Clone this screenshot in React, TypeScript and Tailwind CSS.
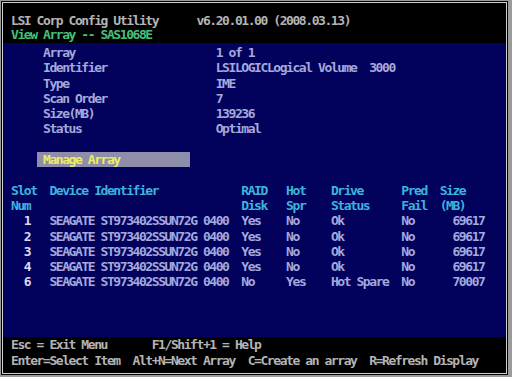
import React from "react";

const L = "text-[#a4a8dc]";
const C = "text-[#3cb4dc]";
const W = "text-[#d8d8f0]";

function sp(n: number) {
  return " ".repeat(Math.max(0, n));
}

type Seg = { t: string; col: number; c?: string; right?: boolean };

function Line({ segs, cls = "" }: { segs: Seg[]; cls?: string }) {
  let pos = 0;
  const out: React.ReactNode[] = [];
  segs.forEach((s, i) => {
    const start = s.right ? s.col - s.t.length : s.col;
    out.push(<span key={"s" + i}>{sp(start - pos)}</span>);
    out.push(
      <span key={"t" + i} className={s.c}>
        {s.t}
      </span>
    );
    pos = start + s.t.length;
  });
  return <div className={"whitespace-pre h-[15.3px] leading-[15.3px] " + cls}>{out}</div>;
}

const info: [string, string][] = [
  ["Array", "1 of 1"],
  ["Identifier", "LSILOGICLogical Volume  3000"],
  ["Type", "IME"],
  ["Scan Order", "7"],
  ["Size(MB)", "139236"],
  ["Status", "Optimal"],
];

const rows: [string, string, string, string, string][] = [
  ["1", "Yes", "No", "Ok", "69617"],
  ["2", "Yes", "No", "Ok", "69617"],
  ["3", "Yes", "No", "Ok", "69617"],
  ["4", "Yes", "No", "Ok", "69617"],
  ["6", "No", "Yes", "Hot Spare", "70007"],
];

export default function App() {
  return (
    <div className="w-[512px] h-[377px] bg-[#9a9a9a] pt-[1px] pl-[1px] pr-[4px] pb-[2px] font-['DejaVu_Sans_Mono',monospace] font-bold text-[13px] tracking-[-1.43px]">
      <div className="w-full h-full bg-black p-[1px]">
        <div className="w-full h-full border border-[#cfcfcf] bg-black flex flex-col">
          <div className="pt-[11px] pb-[1px] pl-[8px] text-[#b4b4b4] leading-[14px]">
            <div className="whitespace-pre h-[14px]">LSI Corp Config Utility      v6.20.01.00 (2008.03.13)</div>
            <div className="whitespace-pre h-[14px] text-[#44c07c]">View Array -- SAS1068E</div>
          </div>
          <div className="flex-1 bg-[#02025c] pt-[2px] pl-[8px]">
            {info.map(([a, b]) => (
              <Line key={a} segs={[{ t: a, col: 5, c: L }, { t: b, col: 32, c: L }]} />
            ))}
            <div className="h-[15.3px]" />
            <div className="h-[15.3px] flex">
              <div className="ml-[25.6px] w-[153.6px] h-full bg-[#8e8eaa] text-[#ecec64] whitespace-pre leading-[15.3px]">
                {" Manage Array"}
              </div>
            </div>
            <div className="h-[15.3px]" />
            <Line
              segs={[
                { t: "Slot", col: 0, c: C },
                { t: "Device Identifier", col: 6, c: C },
                { t: "RAID", col: 36, c: C },
                { t: "Hot", col: 43, c: C },
                { t: "Drive", col: 50, c: C },
                { t: "Pred", col: 61, c: C },
                { t: "Size", col: 67, c: C },
              ]}
            />
            <Line
              segs={[
                { t: "Num", col: 0, c: C },
                { t: "Disk", col: 36, c: C },
                { t: "Spr", col: 43, c: C },
                { t: "Status", col: 50, c: C },
                { t: "Fail", col: 61, c: C },
                { t: "(MB)", col: 67, c: C },
              ]}
            />
            {rows.map((r) => (
              <Line
                key={r[0]}
                segs={[
                  { t: r[0], col: 2, c: W },
                  { t: "SEAGATE ST973402SSUN72G 0400", col: 6, c: L },
                  { t: r[1], col: 36, c: L },
                  { t: r[2], col: 43, c: L },
                  { t: r[3], col: 50, c: L },
                  { t: "No", col: 61, c: L },
                  { t: r[4], col: 74, c: L, right: true },
                ]}
              />
            ))}
          </div>
          <div className="h-[36px] pl-[8px] text-[#b4b4b4] leading-[15.5px]">
            <div className="whitespace-pre">Esc = Exit Menu       F1/Shift+1 = Help</div>
            <div className="whitespace-pre">Enter=Select Item  Alt+N=Next Array  C=Create an array  R=Refresh Display</div>
          </div>
        </div>
      </div>
    </div>
  );
}
